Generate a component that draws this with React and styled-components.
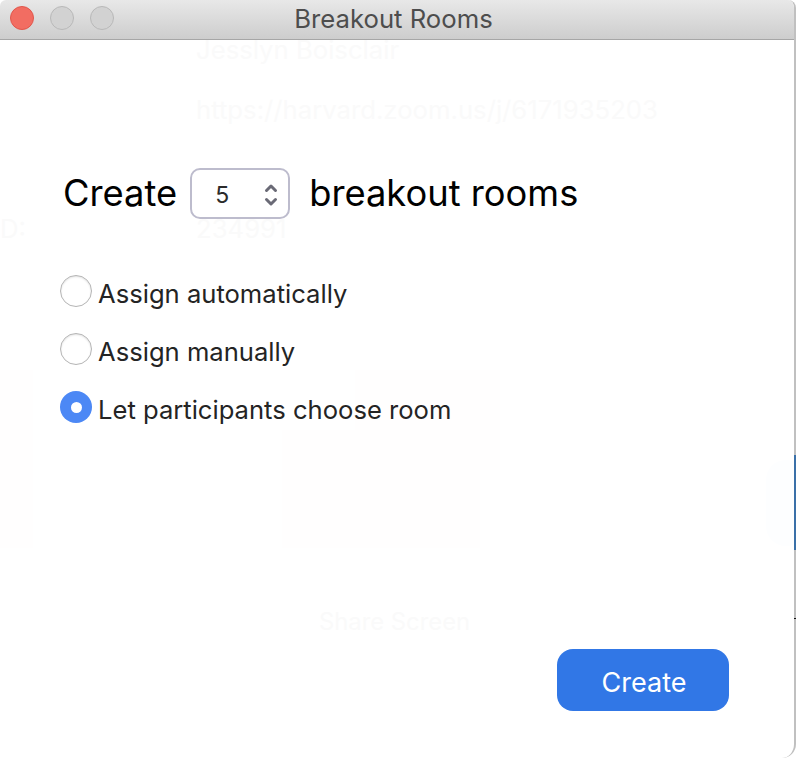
import React from 'react';
import styled, { createGlobalStyle } from 'styled-components';

const GlobalStyle = createGlobalStyle`
  html, body {
    margin: 0;
    padding: 0;
    background: #fff;
  }
`;

const Frame = styled.div`
  position: relative;
  width: 796px;
  height: 758px;
  overflow: hidden;
`;

// The mac style window
const Window = styled.div`
  position: relative;
  box-sizing: border-box;
  width: 796px;
  height: 758px;
  overflow: hidden;
  display: flex;
  flex-direction: column;
  background: #fff;
  border-right: 2px solid #c0c0c0;
  border-radius: 6px 8px 14px 0;
  font-family: Inter, "Liberation Sans", sans-serif;
`;

// Bits of the desktop that peek out at the right edge of the window
const EdgeMark = styled.div`
  position: absolute;
  right: 0;
  top: ${(p) => p.$y}px;
  width: ${(p) => p.$w}px;
  height: ${(p) => p.$h}px;
  background: ${(p) => p.$color};
`;

const TitleBar = styled.div`
  position: relative;
  z-index: 1;
  box-sizing: border-box;
  height: 40px;
  flex-shrink: 0;
  display: flex;
  align-items: center;
  gap: 16px;
  padding: 0 0 4px 10px;
  background: linear-gradient(#e8e8e8, #cdcdcd);
  border-bottom: 1px solid #a6a6a6;
`;

const Dot = styled.span`
  box-sizing: border-box;
  width: 24px;
  height: 24px;
  border-radius: 50%;
  background: ${(p) => (p.$red ? '#f26d62' : '#d2d2d2')};
  border: 1px solid ${(p) => (p.$red ? '#e0574c' : '#b8b8b8')};
`;

const Title = styled.div`
  position: absolute;
  left: 0;
  right: 7px;
  top: 4px;
  text-align: center;
  font-size: 25.7px;
  line-height: 29px;
  color: #4d4d4d;
`;

// Very faint meeting window that shows through the sheet
const GhostText = styled.div`
  position: absolute;
  left: ${(p) => p.$x}px;
  top: ${(p) => p.$y}px;
  font-size: ${(p) => p.$size || 25.7}px;
  line-height: 30px;
  white-space: nowrap;
  color: #fafafa;
`;

const GhostBox = styled.div`
  position: absolute;
  left: ${(p) => p.$x}px;
  top: ${(p) => p.$y}px;
  width: ${(p) => p.$w}px;
  height: ${(p) => p.$h}px;
  border-radius: ${(p) => p.$round || 0}px;
  background: ${(p) => p.$color || '#fffefe'};
`;

const Content = styled.div`
  position: relative;
  flex: 1;
  display: flex;
  flex-direction: column;
  padding: 128px 65px 47px 60px;
`;

const CreateRow = styled.div`
  display: flex;
  align-items: center;
  gap: 13px;
  height: 50px;
  padding-left: 3px;
  font-size: 36.3px;
  line-height: 46px;
  color: #000;
`;

const Stepper = styled.div`
  box-sizing: border-box;
  width: 100px;
  height: 51px;
  margin-right: 6px;
  display: flex;
  align-items: center;
  justify-content: space-between;
  padding: 4px 10px 0 23px;
  border: 2px solid #bdbccd;
  border-radius: 10px;
  background: #fff;
  font-size: 23px;
  color: #2b2b2b;
`;

const Options = styled.div`
  display: flex;
  flex-direction: column;
  gap: 26px;
  margin-top: 57px;
`;

const Option = styled.div`
  display: flex;
  align-items: center;
  gap: 6px;
  height: 32px;
  font-size: 25.6px;
  color: #242424;
`;

const OptionLabel = styled.span`
  padding-top: 5px;
`;

const Radio = styled.span`
  box-sizing: border-box;
  width: 32px;
  height: 32px;
  border-radius: 50%;
  display: flex;
  align-items: center;
  justify-content: center;
  background: ${(p) => (p.$checked ? '#4c88f5' : '#fff')};
  border: ${(p) => (p.$checked ? 'none' : '1.5px solid #b5b5b5')};
  box-shadow: ${(p) => (p.$checked ? 'none' : 'inset 0 1px 2px rgba(0,0,0,.12)')};
`;

const RadioDot = styled.span`
  width: 11px;
  height: 11px;
  border-radius: 50%;
  background: #fff;
`;

const Footer = styled.div`
  margin-top: auto;
  display: flex;
  justify-content: flex-end;
`;

const CreateButton = styled.button`
  width: 172px;
  height: 62px;
  padding: 4px 0 0 2px;
  border: none;
  border-radius: 16px;
  background: #3177e6;
  color: #fff;
  font-family: inherit;
  font-size: 27px;
`;

const Arrows = () => (
  <svg width="14" height="24" viewBox="0 0 14 24" fill="none" stroke="#6a6a76" strokeWidth="3" strokeLinecap="round" strokeLinejoin="round">
    <path d="M2.5 7.5 7 3 11.5 7.5" />
    <path d="M2.5 16.5 7 21 11.5 16.5" />
  </svg>
);

const options = [
  { label: 'Assign automatically' },
  { label: 'Assign manually' },
  { label: 'Let participants choose room', checked: true },
];

const App = () => (
  <Frame>
    <GlobalStyle />
    <Window>
      <GhostText $x={196} $y={35}>Jesslyn Boisclair</GhostText>
      <GhostText $x={196} $y={95}>https://harvard.zoom.us/j/6171935203</GhostText>
      <GhostText $x={0} $y={214}>D:</GhostText>
      <GhostText $x={196} $y={214}>234991</GhostText>
      <GhostText $x={319} $y={607} $size={23.8}>Share Screen</GhostText>
      <GhostBox $x={0} $y={370} $w={33} $h={178} />
      <GhostBox $x={355} $y={370} $w={145} $h={100} />
      <GhostBox $x={282} $y={430} $w={198} $h={118} />
      <GhostBox $x={766} $y={460} $w={40} $h={86} $round={30} $color="#fdfeff" />
      <TitleBar>
        <Dot $red />
        <Dot />
        <Dot />
        <Title>Breakout Rooms</Title>
      </TitleBar>
      <Content>
        <CreateRow>
          Create
          <Stepper>
            5
            <Arrows />
          </Stepper>
          breakout rooms
        </CreateRow>
        <Options>
          {options.map((o) => (
            <Option key={o.label}>
              <Radio $checked={o.checked}>{o.checked && <RadioDot />}</Radio>
              <OptionLabel>{o.label}</OptionLabel>
            </Option>
          ))}
        </Options>
        <Footer>
          <CreateButton>Create</CreateButton>
        </Footer>
      </Content>
    </Window>
    <EdgeMark $y={455} $w={2} $h={95} $color="#3a70a8" />
    <EdgeMark $y={618} $w={2} $h={1} $color="#111" />
  </Frame>
);

export default App;
